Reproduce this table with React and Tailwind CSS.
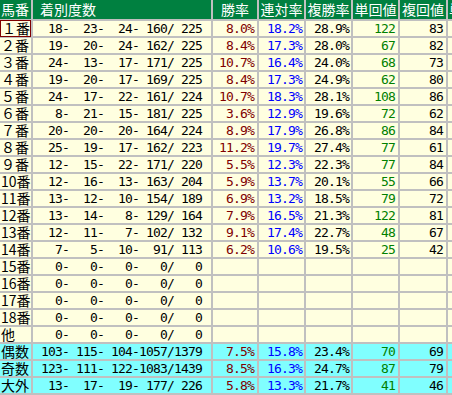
import React from "react";

const rows = [
  ["１番", [18, 23, 24, 160, 225], ["8.0", "18.2", "28.9"], [122, 83]],
  ["２番", [19, 20, 24, 162, 225], ["8.4", "17.3", "28.0"], [67, 82]],
  ["３番", [24, 13, 17, 171, 225], ["10.7", "16.4", "24.0"], [68, 73]],
  ["４番", [19, 20, 17, 169, 225], ["8.4", "17.3", "24.9"], [62, 80]],
  ["５番", [24, 17, 22, 161, 224], ["10.7", "18.3", "28.1"], [108, 86]],
  ["６番", [8, 21, 15, 181, 225], ["3.6", "12.9", "19.6"], [72, 62]],
  ["７番", [20, 20, 20, 164, 224], ["8.9", "17.9", "26.8"], [86, 84]],
  ["８番", [25, 19, 17, 162, 223], ["11.2", "19.7", "27.4"], [77, 61]],
  ["９番", [12, 15, 22, 171, 220], ["5.5", "12.3", "22.3"], [77, 84]],
  ["10番", [12, 16, 13, 163, 204], ["5.9", "13.7", "20.1"], [55, 66]],
  ["11番", [13, 12, 10, 154, 189], ["6.9", "13.2", "18.5"], [79, 72]],
  ["12番", [13, 14, 8, 129, 164], ["7.9", "16.5", "21.3"], [122, 81]],
  ["13番", [12, 11, 7, 102, 132], ["9.1", "17.4", "22.7"], [48, 67]],
  ["14番", [7, 5, 10, 91, 113], ["6.2", "10.6", "19.5"], [25, 42]],
  ["15番", [0, 0, 0, 0, 0], null, null],
  ["16番", [0, 0, 0, 0, 0], null, null],
  ["17番", [0, 0, 0, 0, 0], null, null],
  ["18番", [0, 0, 0, 0, 0], null, null],
  ["他", [0, 0, 0, 0, 0], null, null],
  ["偶数", [103, 115, 104, 1057, 1379], ["7.5", "15.8", "23.4"], [70, 69], true],
  ["奇数", [123, 111, 122, 1083, 1439], ["8.5", "16.3", "24.7"], [87, 79], true],
  ["大外", [13, 17, 19, 177, 226], ["5.8", "13.3", "21.7"], [41, 46], true],
];

const p = (n, w) => String(n).padStart(w, " ");
const fmt = (a) =>
  `${p(a[0], 3)}-${p(a[1], 4)}-${p(a[2], 4)}-${p(a[3], 4)}/${p(a[4], 4)}`;

const jp = "font-['Noto_Sans_CJK_JP',sans-serif]";
const mono =
  "font-['DejaVu_Sans_Mono',monospace] text-[13px] tracking-[-0.83px] leading-[15px] whitespace-pre";

function Head({ children, className = "" }) {
  return (
    <div
      className={`bg-[#008040] text-white text-[14px] leading-[19px] flex items-center overflow-hidden whitespace-nowrap ${jp} ${className}`}
    >
      {children}
    </div>
  );
}

export default function App() {
  return (
    <div className="w-[452px] h-[395px] overflow-hidden bg-white">
      <div className="w-[520px] bg-[#c0c0c0] pb-[2px] grid grid-cols-[31px_178px_44px_45px_45px_45px_46px_60px] grid-rows-[19px] auto-rows-[15px] gap-x-[2px] gap-y-[2px]">
        <Head className="pl-[1px]">馬番</Head>
        <Head className="pl-[7px]">着別度数</Head>
        <Head className="justify-center">勝率</Head>
        <Head className="justify-center">連対率</Head>
        <Head className="justify-center">複勝率</Head>
        <Head className="justify-center">単回値</Head>
        <Head className="justify-center">複回値</Head>
        <Head className="pl-[1px]">単</Head>
        {rows.map(([label, counts, pct, vals, cyan], i) => {
          const bg = cyan ? "bg-[#80ffff]" : "bg-[#ffffe0]";
          return (
            <React.Fragment key={label}>
              <div
                className={`${bg} ${jp} text-[14px] leading-[13px] text-black flex items-center pl-[1px] whitespace-nowrap ${
                  i === 0 ? "border border-[#800000] -mt-px -mb-px" : ""
                }`}
              >
                {label}
              </div>
              <div className={`${bg} ${mono} text-black flex items-center pl-[8px]`}>
                {fmt(counts)}
              </div>
              <div className={`${bg} ${mono} text-[#800000] flex items-center justify-end pr-[3px]`}>
                {pct ? `${pct[0]}%` : ""}
              </div>
              <div className={`${bg} ${mono} text-[#0000ff] flex items-center justify-end pr-[2px]`}>
                {pct ? `${pct[1]}%` : ""}
              </div>
              <div className={`${bg} ${mono} text-black flex items-center justify-end pr-[2px]`}>
                {pct ? `${pct[2]}%` : ""}
              </div>
              <div className={`${bg} ${mono} text-[#008000] flex items-center justify-end pr-[3px]`}>
                {vals ? vals[0] : ""}
              </div>
              <div className={`${bg} ${mono} text-black flex items-center justify-end pr-[3px]`}>
                {vals ? vals[1] : ""}
              </div>
              <div className={`${bg}`}></div>
            </React.Fragment>
          );
        })}
      </div>
    </div>
  );
}
